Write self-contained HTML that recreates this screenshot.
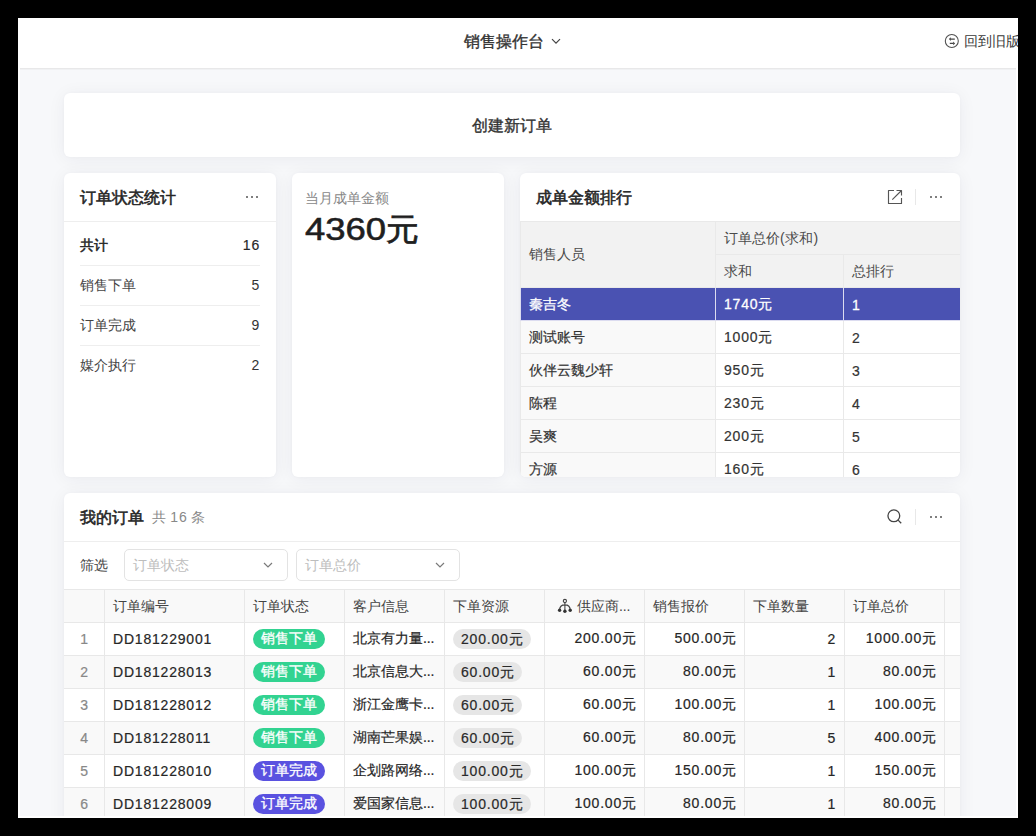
<!DOCTYPE html>
<html><head><meta charset="utf-8">
<style>
*{box-sizing:border-box;margin:0;padding:0}
html,body{width:1036px;height:836px;overflow:hidden;background:#000;font-family:"Liberation Sans",sans-serif;color:#333}
#frame{position:absolute;left:18px;top:18px;width:1000px;height:800px;background:#fff;overflow:hidden}
#hdr{position:absolute;left:0;top:0;width:1000px;height:50px;background:#fff}
#hdr .ttl{position:absolute;left:446px;top:14px;font-size:16px;font-weight:400;-webkit-text-stroke:0.35px #333;color:#333;line-height:20px;white-space:nowrap}
#hdr .chev{position:absolute;left:533px;top:20px;width:10px;height:7px}
#hdr .back{position:absolute;left:926px;top:14px;font-size:14px;color:#3a3a3a;line-height:18px;white-space:nowrap}
#hdr .swap{position:absolute;left:926px;top:15px;width:16px;height:16px}
#main{position:absolute;left:2px;top:50px;width:996px;height:748px;background:#f7f8fa;border-top:1px solid #e8e8e9;overflow:hidden}
.card{position:absolute;background:#fff;border-radius:6px;box-shadow:0 0 3px rgba(30,40,60,0.03),0 2px 18px rgba(30,40,60,0.06);overflow:hidden}
.ch{position:absolute;left:0;top:0;right:0;height:49px;border-bottom:1px solid #eeeeee}
.ct{position:absolute;left:16px;top:15px;font-size:16px;font-weight:400;-webkit-text-stroke:0.55px #262626;line-height:20px;color:#262626;white-space:nowrap}
.dots{position:absolute;top:23px;width:14px;height:3px}
.dots i{position:absolute;top:0;width:2px;height:2px;border-radius:1px;background:#555}
.sep{position:absolute;top:16px;width:1px;height:16px;background:#e8e8e8}
/* list */
.row{position:absolute;left:16px;width:180px;height:40px;border-bottom:1px solid #eeeeee;font-size:14px;line-height:38px}
.row .l{position:absolute;left:0;top:0;color:#444}
.row .r{position:absolute;right:0;top:0;color:#333}
/* pivot */
table{border-collapse:collapse;table-layout:fixed}
.pv td{height:33px;border:1px solid #e9e9e9;font-size:14px;padding:2px 8px 0;white-space:nowrap;color:#333}
.pv .hd{background:#f2f2f2;color:#4a4a4a;-webkit-text-stroke:0}
.pv .rh{background:#f9f9f9}
.pv .sel td{background:#4a52b2;color:#fff;border-color:#dcdcf0;-webkit-text-stroke:0.3px #fff}
.od td{height:33px;border:1px solid #e8e8e8;font-size:14px;padding:2px 8px 0;white-space:nowrap;color:#333;overflow:hidden}
.od thead td{background:#f9f9f9;color:#444}
.od tbody td{padding-top:0}
.od tbody tr:nth-child(even) td{background:#f9f9f9}
.od .idx{text-align:center;color:#888;padding:0 0 0 1px}
.od .num{text-align:right}
.tag{display:inline-block;height:20px;line-height:18px;border-radius:10px;padding:0 8px 2px;font-size:14px;vertical-align:middle;position:relative;top:0}
.tg{background:#32d391;color:#fff;-webkit-text-stroke:0.3px #fff}
.tp{background:#5a52e0;color:#fff;-webkit-text-stroke:0.3px #fff}
.tgr{background:#e6e6e6;color:#2a2a2a;line-height:20px;padding-bottom:0}
.sel-box{position:absolute;top:56px;width:164px;height:32px;border:1px solid #e3e3e3;border-radius:5px;background:#fff}
.sel-box span{position:absolute;left:8px;top:6px;font-size:14px;line-height:18px;color:#bdbdbd}
.sel-box svg{position:absolute;right:14px;top:11.5px}
.n{letter-spacing:0.8px}
.od tbody td,.pv td{-webkit-text-stroke:0.2px currentColor}
.od tbody td{color:#262626}
</style></head>
<body>
<div id="frame">
  <div id="hdr">
    <div class="ttl">销售操作台</div>
    <svg class="chev" viewBox="0 0 10 7"><path d="M1 1.2 L5 5.2 L9 1.2" fill="none" stroke="#444" stroke-width="1.2"/></svg>
    <svg class="swap" width="16" height="16" viewBox="0 0 16 16"><circle cx="7.8" cy="8.05" r="6.5" fill="none" stroke="#505050" stroke-width="1.05"/><path d="M6.2 6.1H10.8M5.8 10.4H9.6" fill="none" stroke="#444" stroke-width="1.1"/><path d="M4.9 6.1L6.8 4.3V7.9Z M11.1 10.4L9.2 8.6V12.2Z" fill="#444"/></svg>
    <div class="back" style="left:946px">回到旧版</div>
  </div>
  <div id="main">
    <div style="position:absolute;left:0;top:0;width:996px;height:1px;background:#f0f1f3"></div>
    <!-- card 1 -->
    <div class="card" style="left:44px;top:24px;width:896px;height:64px">
      <div style="position:absolute;left:0;right:0;top:23px;text-align:center;font-size:16px;line-height:20px;color:#333;-webkit-text-stroke:0.35px #333">创建新订单</div>
    </div>
    <!-- card A -->
    <div class="card" style="left:44px;top:104px;width:212px;height:304px">
      <div class="ch"><div class="ct">订单状态统计</div>
        <div class="dots" style="left:182px"><i style="left:0"></i><i style="left:5px"></i><i style="left:10px"></i></div></div>
      <div class="row" style="top:53px"><span class="l" style="-webkit-text-stroke:0.5px #262626;color:#262626">共计</span><span class="r" style="-webkit-text-stroke:0.15px #262626;color:#262626"><span class="n">16</span></span></div>
      <div class="row" style="top:93px"><span class="l">销售下单</span><span class="r"><span class="n">5</span></span></div>
      <div class="row" style="top:133px"><span class="l">订单完成</span><span class="r"><span class="n">9</span></span></div>
      <div class="row" style="top:173px;border-bottom:none"><span class="l">媒介执行</span><span class="r"><span class="n">2</span></span></div>
    </div>
    <!-- card B -->
    <div class="card" style="left:272px;top:104px;width:212px;height:304px">
      <div style="position:absolute;left:13px;top:16px;font-size:14px;line-height:18px;color:#888">当月成单金额</div>
      <div style="position:absolute;left:13px;top:36px;font-size:32px;line-height:40px;color:#1f1f1f;-webkit-text-stroke:0.6px #1f1f1f;white-space:nowrap"><span style="display:inline-block;transform:scaleX(1.14);transform-origin:0 0;margin-right:9.5px">4360</span><span style="font-size:31px;-webkit-text-stroke:0.8px #1f1f1f;display:inline-block;transform:scaleX(1.06);transform-origin:0 0">元</span></div>
    </div>
    <!-- card C -->
    <div class="card" style="left:500px;top:104px;width:440px;height:304px">
      <div class="ch"><div class="ct">成单金额排行</div>
        <svg style="position:absolute;left:367px;top:16px" width="16" height="16" viewBox="0 0 16 16"><path d="M7 1.5H1.5V14.5H14.5V9M9.5 1.5H14.5V6.5M14.5 1.5L5.3 10.7" fill="none" stroke="#555" stroke-width="1.15" stroke-linejoin="round"/></svg>
        <div class="sep" style="left:395px"></div>
        <div class="dots" style="left:410px"><i style="left:0"></i><i style="left:5px"></i><i style="left:10px"></i></div>
      </div>
      <table class="pv" style="position:absolute;left:0;top:48px;width:441px">
        <colgroup><col style="width:195px"><col style="width:128px"><col style="width:118px"></colgroup>
        <tr><td class="hd" rowspan="2" style="padding-top:0">销售人员</td><td class="hd" colspan="2">订单总价<span class="n">(</span>求和<span class="n">)</span></td></tr>
        <tr><td class="hd">求和</td><td class="hd">总排行</td></tr>
        <tr class="sel"><td>秦吉冬</td><td><span class="n">1740</span>元</td><td><span class="n">1</span></td></tr>
        <tr><td class="rh">测试账号</td><td><span class="n">1000</span>元</td><td><span class="n">2</span></td></tr>
        <tr><td class="rh">伙伴云魏少轩</td><td><span class="n">950</span>元</td><td><span class="n">3</span></td></tr>
        <tr><td class="rh">陈程</td><td><span class="n">230</span>元</td><td><span class="n">4</span></td></tr>
        <tr><td class="rh">吴爽</td><td><span class="n">200</span>元</td><td><span class="n">5</span></td></tr>
        <tr><td class="rh">方源</td><td><span class="n">160</span>元</td><td><span class="n">6</span></td></tr>
      </table>
    </div>
    <!-- card D -->
    <div class="card" style="left:44px;top:424px;width:896px;height:400px">
      <div class="ch"><div class="ct">我的订单 <span style="font-size:14px;color:#888;margin-left:4px;-webkit-text-stroke:0;position:relative;top:-1px">共 <span class="n">16</span> 条</span></div>
        <svg style="position:absolute;left:822px;top:16px" width="16" height="16" viewBox="0 0 16 16"><circle cx="7.85" cy="6.8" r="5.9" fill="none" stroke="#444" stroke-width="1.3"/><path d="M12.1 11.1L15.2 14.3" stroke="#444" stroke-width="1.3"/></svg>
        <div class="sep" style="left:851px"></div>
        <div class="dots" style="left:866px"><i style="left:0"></i><i style="left:5px"></i><i style="left:10px"></i></div>
      </div>
      <div style="position:absolute;left:16px;top:63px;font-size:14px;line-height:18px;color:#444">筛选</div>
      <div class="sel-box" style="left:60px"><span>订单状态</span><svg width="10" height="6" viewBox="0 0 10 6"><path d="M1 1L5 5L9 1" fill="none" stroke="#7a7a7a" stroke-width="1.2"/></svg></div>
      <div class="sel-box" style="left:232px"><span>订单总价</span><svg width="10" height="6" viewBox="0 0 10 6"><path d="M1 1L5 5L9 1" fill="none" stroke="#7a7a7a" stroke-width="1.2"/></svg></div>
      <table class="od" style="position:absolute;left:-1px;top:96px;width:920px">
        <colgroup><col style="width:41px"><col style="width:140px"><col style="width:100px"><col style="width:100px"><col style="width:100px"><col style="width:100px"><col style="width:100px"><col style="width:100px"><col style="width:100px"><col style="width:100px"></colgroup>
        <thead><tr><td></td><td>订单编号</td><td>订单状态</td><td>客户信息</td><td>下单资源</td><td style="position:relative;padding-left:32px"><svg style="position:absolute;left:11px;top:6px" width="18" height="18" viewBox="0 0 18 18"><circle cx="8.9" cy="5" r="1.6" fill="none" stroke="#444" stroke-width="1.1"/><path d="M8.9 6.6V15M3.6 14.3Q3.6 8.9 8.9 8.9Q14.2 8.9 14.2 14.3" fill="none" stroke="#444" stroke-width="1.1"/><circle cx="3.6" cy="14.3" r="1.7" fill="#333"/><circle cx="8.9" cy="15.3" r="1.7" fill="#333"/><circle cx="14.2" cy="14.3" r="1.7" fill="#333"/></svg>供应商<span style="letter-spacing:-0.2px">...</span></td><td>销售报价</td><td>下单数量</td><td>订单总价</td><td></td></tr></thead>
        <tbody>
        <tr><td class="idx"><span class="n">1</span></td><td><span class="n">DD181229001</span></td><td><span class="tag tg">销售下单</span></td><td>北京有力量<span style="letter-spacing:-0.2px">...</span></td><td><span class="tag tgr"><span class="n">200.00</span>元</span></td><td class="num"><span class="n">200.00</span>元</td><td class="num"><span class="n">500.00</span>元</td><td class="num"><span class="n">2</span></td><td class="num"><span class="n">1000.00</span>元</td><td></td></tr>
        <tr><td class="idx"><span class="n">2</span></td><td><span class="n">DD181228013</span></td><td><span class="tag tg">销售下单</span></td><td>北京信息大<span style="letter-spacing:-0.2px">...</span></td><td><span class="tag tgr"><span class="n">60.00</span>元</span></td><td class="num"><span class="n">60.00</span>元</td><td class="num"><span class="n">80.00</span>元</td><td class="num"><span class="n">1</span></td><td class="num"><span class="n">80.00</span>元</td><td></td></tr>
        <tr><td class="idx"><span class="n">3</span></td><td><span class="n">DD181228012</span></td><td><span class="tag tg">销售下单</span></td><td>浙江金鹰卡<span style="letter-spacing:-0.2px">...</span></td><td><span class="tag tgr"><span class="n">60.00</span>元</span></td><td class="num"><span class="n">60.00</span>元</td><td class="num"><span class="n">100.00</span>元</td><td class="num"><span class="n">1</span></td><td class="num"><span class="n">100.00</span>元</td><td></td></tr>
        <tr><td class="idx"><span class="n">4</span></td><td><span class="n">DD181228011</span></td><td><span class="tag tg">销售下单</span></td><td>湖南芒果娱<span style="letter-spacing:-0.2px">...</span></td><td><span class="tag tgr"><span class="n">60.00</span>元</span></td><td class="num"><span class="n">60.00</span>元</td><td class="num"><span class="n">80.00</span>元</td><td class="num"><span class="n">5</span></td><td class="num"><span class="n">400.00</span>元</td><td></td></tr>
        <tr><td class="idx"><span class="n">5</span></td><td><span class="n">DD181228010</span></td><td><span class="tag tp">订单完成</span></td><td>企划路网络<span style="letter-spacing:-0.2px">...</span></td><td><span class="tag tgr"><span class="n">100.00</span>元</span></td><td class="num"><span class="n">100.00</span>元</td><td class="num"><span class="n">150.00</span>元</td><td class="num"><span class="n">1</span></td><td class="num"><span class="n">150.00</span>元</td><td></td></tr>
        <tr><td class="idx"><span class="n">6</span></td><td><span class="n">DD181228009</span></td><td><span class="tag tp">订单完成</span></td><td>爱国家信息<span style="letter-spacing:-0.2px">...</span></td><td><span class="tag tgr"><span class="n">100.00</span>元</span></td><td class="num"><span class="n">100.00</span>元</td><td class="num"><span class="n">80.00</span>元</td><td class="num"><span class="n">1</span></td><td class="num"><span class="n">80.00</span>元</td><td></td></tr>
        </tbody>
      </table>
    </div>
  </div>
  <div style="position:absolute;left:0;top:50px;width:2px;height:750px;background:#fff"></div>
  <div style="position:absolute;right:0;top:50px;width:2px;height:750px;background:#fff"></div>
  <div style="position:absolute;left:0;bottom:0;width:1000px;height:2px;background:#fff"></div>
</div>
</body></html>
